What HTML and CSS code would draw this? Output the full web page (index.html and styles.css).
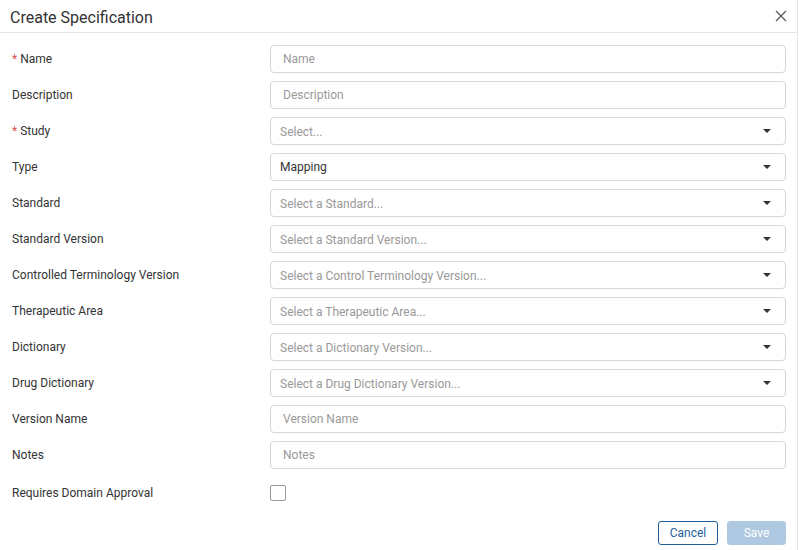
FILE: index.html
```html
<!DOCTYPE html>
<html>
<head>
<meta charset="utf-8">
<link rel="stylesheet" href="styles.css">
</head>
<body>
<div class="modal">
  <div class="modal-header">
    <span class="title">Create Specification</span>
    <svg class="close" width="12" height="12" viewBox="0 0 12 12"><path d="M1 1L11 11M11 1L1 11" stroke="#555" stroke-width="1.2" fill="none"/></svg>
  </div>
  <div class="form">
    <div class="row"><label><span class="req">*</span> Name</label><div class="input"><span class="ph">Name</span></div></div>
    <div class="row"><label>Description</label><div class="input"><span class="ph">Description</span></div></div>
    <div class="row"><label><span class="req">*</span> Study</label><div class="input select"><span class="ph">Select...</span><i class="caret"></i></div></div>
    <div class="row"><label>Type</label><div class="input select"><span class="val">Mapping</span><i class="caret"></i></div></div>
    <div class="row"><label>Standard</label><div class="input select"><span class="ph">Select a Standard...</span><i class="caret"></i></div></div>
    <div class="row"><label>Standard Version</label><div class="input select"><span class="ph">Select a Standard Version...</span><i class="caret"></i></div></div>
    <div class="row"><label>Controlled Terminology Version</label><div class="input select"><span class="ph">Select a Control Terminology Version...</span><i class="caret"></i></div></div>
    <div class="row"><label>Therapeutic Area</label><div class="input select"><span class="ph">Select a Therapeutic Area...</span><i class="caret"></i></div></div>
    <div class="row"><label>Dictionary</label><div class="input select"><span class="ph">Select a Dictionary Version...</span><i class="caret"></i></div></div>
    <div class="row"><label>Drug Dictionary</label><div class="input select"><span class="ph">Select a Drug Dictionary Version...</span><i class="caret"></i></div></div>
    <div class="row"><label>Version Name</label><div class="input"><span class="ph">Version Name</span></div></div>
    <div class="row"><label>Notes</label><div class="input"><span class="ph">Notes</span></div></div>
    <div class="row check-row"><label>Requires Domain Approval</label><div><span class="checkbox"></span></div></div>
  </div>
  <div class="footer">
    <button class="btn cancel">Cancel</button>
    <button class="btn save">Save</button>
  </div>
</div>
</body>
</html>
```

FILE: styles.css
```css
* { box-sizing: border-box; }
html, body { margin: 0; padding: 0; background: #fff; }
body { font-family: Roboto, "Liberation Sans", sans-serif; color: #333; }
.modal {
  width: 798px;
  height: 550px;
  border-right: 1px solid #e6e6e6;
  display: flex;
  flex-direction: column;
}
.modal > * { flex-shrink: 0; }
.modal-header {
  height: 33px;
  border-bottom: 1px solid #e5e5e5;
  display: flex;
  align-items: center;
  justify-content: space-between;
  padding: 0 10px 0 10px;
}
.title { font-size: 16px; color: #333; padding-top: 2px; }
.form {
  padding: 12px 11px 0 12px;
  display: flex;
  flex-direction: column;
  gap: 8px;
}
.row {
  display: grid;
  grid-template-columns: 258px 1fr;
  align-items: center;
  height: 28px;
}
.row label { font-size: 12px; color: #333; }
.req { color: #d9534f; }
.input {
  height: 28px;
  border: 1px solid #d6d6d6;
  border-radius: 4px;
  display: flex;
  align-items: center;
  padding: 0 12px;
  font-size: 12px;
}
.input.select { padding: 0 9px; justify-content: space-between; }
.ph { color: #999; }
.select .ph { padding-top: 2px; }
.val { color: #333; }
.caret {
  width: 0; height: 0;
  border-left: 4px solid transparent;
  border-right: 4px solid transparent;
  border-top: 4px solid #333;
  margin-right: 5px;
}
.check-row { height: 32px; }
.checkbox {
  display: block;
  width: 16px; height: 16px;
  border: 1px solid #999;
  border-radius: 2px;
  background: #fff;
}
.footer {
  display: flex;
  justify-content: flex-end;
  gap: 9px;
  padding: 12px 11px 0 0;
}
.btn {
  font-family: Roboto, "Liberation Sans", sans-serif;
  font-size: 12px;
  height: 24px;
  border-radius: 3px;
  padding: 0;
}
.cancel { width: 60px; background: #fff; border: 1px solid #1f5d9c; color: #1f5d9c; }
.save { width: 59px; background: #adc8e0; border: 1px solid #adc8e0; color: #fff; }
```
